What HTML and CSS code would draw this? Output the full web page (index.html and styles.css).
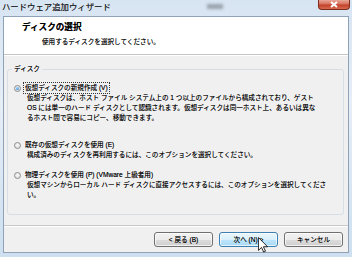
FILE: index.html
```html
<!DOCTYPE html>
<html lang="ja">
<head>
    <meta charset="UTF-8">
    <title>ハードウェア追加ウィザード</title>
    <link rel="stylesheet" href="styles.css">
</head>
<body>
    <div class="window">
        <div class="titlebar">
            <span class="title">ハードウェア追加ウィザード</span>
            <span class="smudge"></span>
            <div class="close">
                <svg width="10" height="7" viewBox="0 0 10 7"><path d="M2 1 L8 6 M8 1 L2 6" stroke="#fff" stroke-width="2"/></svg>
            </div>
        </div>

        <div class="client">
            <div class="header">
                <div class="header-title">ディスクの選択</div>
                <div class="header-sub">使用するディスクを選択してください。</div>
            </div>

            <div class="body">
                <fieldset class="group">
                    <legend>ディスク</legend>
                    <div class="options">
                        <div class="opt">
                            <span class="radio on"></span>
                            <span class="label focus">仮想ディスクの新規作成 (V)</span>
                        </div>
                        <div class="desc">仮想ディスクは、ホスト ファイル システム上の 1 つ以上のファイルから構成されており、ゲスト<br>OS には単一のハード ディスクとして認識されます。仮想ディスクは同一ホスト上、あるいは異な<br>るホスト間で容易にコピー、移動できます。</div>

                        <div class="opt second">
                            <span class="radio"></span>
                            <span class="label">既存の仮想ディスクを使用 (E)</span>
                        </div>
                        <div class="desc">構成済みのディスクを再利用するには、このオプションを選択してください。</div>

                        <div class="opt third">
                            <span class="radio"></span>
                            <span class="label">物理ディスクを使用 (P) (VMware 上級者用)</span>
                        </div>
                        <div class="desc">仮想マシンからローカル ハード ディスクに直接アクセスするには、このオプションを選択してくださ<br>い。</div>
                    </div>
                </fieldset>
            </div>

            <div class="buttons">
                <div class="btn">&lt; 戻る (B)</div>
                <div class="btn hover">次へ (N) &gt;</div>
                <div class="btn">キャンセル</div>
            </div>
        </div>

        <svg class="cursor" width="10" height="16" viewBox="0 0 12 19">
            <path d="M0.5 0.5 V16 L4.2 12.4 L6.8 18 L9 17 L6.5 11.6 H11.5 Z" fill="#fff" stroke="#000" stroke-width="1"/>
        </svg>
    </div>
</body>
</html>
```

FILE: styles.css
```css
* {
    margin: 0;
    padding: 0;
    box-sizing: border-box;
}

body {
    width: 352px;
    height: 257px;
    overflow: hidden;
    font-family: "Liberation Sans", "Noto Sans CJK JP", sans-serif;
    font-size: 6.6px;
    color: #000;
    text-shadow: 0 0 0.4px rgba(0, 0, 0, 0.6);
}

.window {
    position: relative;
    display: flex;
    flex-direction: column;
    width: 352px;
    height: 257px;
    padding: 0 3px 4px 3px;
    background: linear-gradient(to bottom, #d7e4f2 0%, #e6eef7 40%, #cddff0 100%);
}

.titlebar {
    position: relative;
    display: flex;
    align-items: center;
    height: 16px;
    margin: 0 -3px;
    padding-left: 2px;
}

.title {
    font-size: 8.4px;
    line-height: 10px;
    color: #222;
    margin-top: -2px;
}

.smudge {
    position: absolute;
    left: 207px;
    top: 4px;
    width: 16px;
    height: 5px;
    background: #9aa4ae;
    filter: blur(1.5px);
}

.close {
    position: absolute;
    top: 0;
    right: 2px;
    width: 32px;
    height: 10px;
    display: flex;
    align-items: center;
    justify-content: center;
    border: 1px solid #7a2b1c;
    border-top: 0;
    border-radius: 0 0 4px 4px;
    background: linear-gradient(to bottom, #e9a899 0%, #d7705b 45%, #c2412a 55%, #d66a4f 100%);
}

.client {
    flex: 1;
    display: flex;
    flex-direction: column;
    border: 1px solid #8fa2b8;
    background: #f0f0f0;
}

.header {
    height: 38px;
    background: #fff;
    border-bottom: 1px solid #c5c5c5;
    padding: 5px 0 0 18px;
}

.header-title {
    font-size: 8.6px;
    font-weight: bold;
    line-height: 10px;
}

.header-sub {
    line-height: 10px;
    margin-top: 5px;
    padding-left: 20px;
}

.body {
    flex: 1;
    padding: 8px 4px 0 3px;
    border-top: 1px solid #fff;
}

.group {
    border: 1px solid #d5dfe5;
    border-radius: 3px;
    padding: 0 0 14px 0;
}

.group legend {
    margin-left: 4px;
    padding: 0 2px;
    line-height: 10px;
}

.options {
    padding: 9px 0 0 6px;
}

.opt {
    display: flex;
    align-items: center;
    height: 10px;
    line-height: 10px;
}

.opt.second {
    margin-top: 17px;
}

.opt.third {
    margin-top: 10px;
}

.radio {
    position: relative;
    width: 7px;
    height: 7px;
    border-radius: 50%;
    border: 1px solid #8a8c8e;
    background: radial-gradient(circle at 50% 40%, #fafafa, #d8d8d8);
    margin-right: 3px;
}

.radio.on::after {
    content: "";
    position: absolute;
    left: 1px;
    top: 1px;
    width: 3px;
    height: 3px;
    border-radius: 50%;
    background: radial-gradient(circle at 40% 35%, #9fdcff, #1f6fcf);
}

.label {
    padding: 0 1px;
    white-space: nowrap;
}

.label.focus {
    outline: 1px dotted #333;
    outline-offset: 0;
}

.desc {
    margin-left: 13px;
    line-height: 10px;
    white-space: nowrap;
}

.buttons {
    display: flex;
    justify-content: flex-end;
    gap: 6px;
    height: 27px;
    padding: 6px 5px 0 0;
    border-top: 1px solid #c8c8c8;
    box-shadow: inset 0 1px #fff;
}

.btn {
    width: 59px;
    height: 15px;
    display: flex;
    align-items: center;
    justify-content: center;
    border: 1px solid #707070;
    border-radius: 3px;
    background: linear-gradient(to bottom, #f2f2f2 0%, #ebebeb 50%, #dddddd 50%, #cfcfcf 100%);
    box-shadow: inset 0 0 0 1px rgba(255, 255, 255, 0.7);
    line-height: 10px;
}

.btn.hover {
    border-color: #3c7fb1;
    background: linear-gradient(to bottom, #eaf6fd 0%, #d9f0fc 50%, #bee6fd 50%, #a7d9f5 100%);
}

.cursor {
    position: absolute;
    left: 258px;
    top: 237px;
}
```
